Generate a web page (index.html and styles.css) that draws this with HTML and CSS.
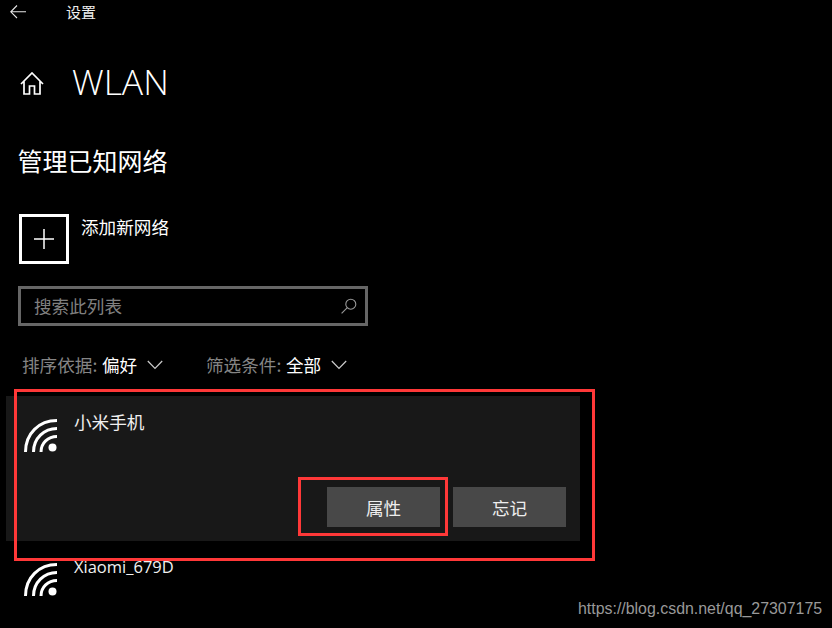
FILE: index.html
```html
<!DOCTYPE html>
<html lang="zh">
<head>
<meta charset="utf-8">
<title>设置</title>
<link rel="stylesheet" href="styles.css">
</head>
<body>
<div class="page">
  <header class="topbar">
    <svg class="back" width="16" height="14" viewBox="0 0 16 14"><path d="M7 .5 .8 6.800 7 13M1 6.800h15" fill="none" stroke="#e6e6e6" stroke-width="1.100"/></svg>
    <span class="app-name">设置</span>
  </header>
  <div class="title-row">
    <svg class="home" width="24" height="23" viewBox="0 0 24 23"><path d="M1 12 12 1l11 11M4 9.500V22h5.500v-8h5v8H20V9.500" fill="none" stroke="#fff" stroke-width="1.700"/></svg>
    <h1 class="title">WLAN</h1>
  </div>
  <h2 class="subtitle">管理已知网络</h2>
  <div class="add-row">
    <div class="add-box"><svg width="20" height="20" viewBox="0 0 20 20"><path d="M10 0v20M0 10h20" stroke="#fff" stroke-width="1.500"/></svg></div>
    <span class="add-label">添加新网络</span>
  </div>
  <div class="search">
    <span class="search-text">搜索此列表</span>
    <svg width="16" height="16" viewBox="0 0 16 16"><circle cx="9.800" cy="6.200" r="5" fill="none" stroke="#999" stroke-width="1.100"/><path d="M6.300 9.700.6 15.400" stroke="#999" stroke-width="1.100"/></svg>
  </div>
  <div class="filters">
    <div class="filter filter-sort">
      <span class="filter-key">排序依据:</span><span class="filter-value">偏好</span>
      <svg class="chev" width="16" height="10" viewBox="0 0 16 10"><path d="M.8 1 8 8.500 15.200 1" fill="none" stroke="#ccc" stroke-width="1.200"/></svg>
    </div>
    <div class="filter">
      <span class="filter-key">筛选条件:</span><span class="filter-value">全部</span>
      <svg class="chev" width="16" height="10" viewBox="0 0 16 10"><path d="M.8 1 8 8.500 15.200 1" fill="none" stroke="#ccc" stroke-width="1.200"/></svg>
    </div>
  </div>
  <section class="network selected">
    <div class="net-head">
      <svg class="wifi" width="33" height="33" viewBox="0 0 33 33"><g fill="none" stroke="#fff" stroke-width="3"><path d="M1.500 33C1.500 14.500 15 1.500 33 1.500"/><path d="M9.500 33C9.500 19.500 20 9.500 33 9.500"/><path d="M17 33C17 24 24 17.500 33 17.500"/></g><circle cx="28.500" cy="28.500" r="4" fill="#fff"/></svg>
      <span class="net-name">小米手机</span>
    </div>
    <div class="net-actions">
      <button class="btn">属性</button>
      <button class="btn">忘记</button>
    </div>
  </section>
  <section class="network clipped">
    <div class="net-head">
      <svg class="wifi" width="33" height="33" viewBox="0 0 33 33"><g fill="none" stroke="#fff" stroke-width="3"><path d="M1.500 33C1.500 14.500 15 1.500 33 1.500"/><path d="M9.500 33C9.500 19.500 20 9.500 33 9.500"/><path d="M17 33C17 24 24 17.500 33 17.500"/></g><circle cx="28.500" cy="28.500" r="4" fill="#fff"/></svg>
      <span class="net-name latin">Xiaomi_679D</span>
    </div>
  </section>
  <div class="mark mark-outer"></div>
  <div class="mark mark-inner"></div>
  <div class="watermark">https://blog.csdn.net/qq_27307175</div>
</div>
</body>
</html>
```
FILE: styles.css
```css
* { box-sizing: border-box; }
html, body { margin: 0; padding: 0; background: #000; }
.page {
  position: relative;
  width: 832px;
  height: 628px;
  overflow: hidden;
  color: #fff;
  font-family: "Noto Sans CJK SC", "Noto Sans", sans-serif;
}
.topbar { display: flex; align-items: flex-start; height: 25px; padding-left: 10px; }
.back { margin-top: 5px; }
.app-name { margin-left: 40px; font-size: 15px; line-height: 23px; color: #eee; }
.title-row { display: flex; align-items: center; height: 50px; margin-top: 31px; padding-left: 20px; }
.home { margin-top: 5px; }
.title { margin: 0 0 0 28px; font-family: "Open Sans", sans-serif; font-weight: 300; font-size: 35.500px; line-height: 50px; }
.subtitle { margin: 36px 0 0 17.500px; font-size: 25px; font-weight: 400; line-height: 36px; }
.add-row { display: flex; margin: 36px 0 0 19px; }
.add-box { display: flex; align-items: center; justify-content: center; width: 50px; height: 50px; border: 3px solid #fff; }
.add-label { margin-left: 12px; font-size: 17.6px; line-height: 25px; }
.search {
  display: flex; align-items: center; justify-content: space-between;
  width: 350px; height: 40px; margin: 22px 0 0 18px; padding: 0 8px 0 13px;
  border: 3px solid #666;
}
.search-text { font-size: 17.6px; line-height: 24px; color: #808080; }
.filters { display: flex; margin: 22px 0 0 22px; height: 32px; align-items: center; }
.filter { display: flex; align-items: center; font-size: 17.6px; }
.filter-sort { width: 184px; }
.filter-key { color: #858585; width: 80px; }
.filter-value { color: #fff; }
.chev { margin-left: 10px; margin-top: 1px; }
.network { margin-left: 6px; width: 574px; }
.selected { height: 145px; margin-top: 16px; background: #181818; }
.clipped { height: 67px; margin-top: 20px; overflow: hidden; }
.net-head { display: flex; padding: 23px 0 0 18px; }
.clipped .net-head { padding-top: 2px; }
.net-name { margin-left: 17px; margin-top: -10px; font-size: 17.6px; line-height: 26px; color: #f0f0f0; }
.latin { font-family: "Open Sans", sans-serif; font-size: 16.500px; margin-top: -9px; }
.net-actions { display: flex; justify-content: flex-end; gap: 13px; margin-top: 35px; padding-right: 14px; }
.btn {
  width: 113px; height: 40px; padding: 0; border: 0; background: #484848;
  color: #eee; font-family: inherit; font-size: 17.6px;
}
.mark { position: absolute; border: 3px solid #ff3838; pointer-events: none; }
.mark-outer { left: 14px; top: 389px; width: 581px; height: 172px; }
.mark-inner { left: 298px; top: 477px; width: 150px; height: 59px; }
.watermark {
  position: absolute; left: 578px; top: 599px;
  font-family: "Liberation Sans", sans-serif; font-size: 15.920px; line-height: 20px; color: #999;
}
```
